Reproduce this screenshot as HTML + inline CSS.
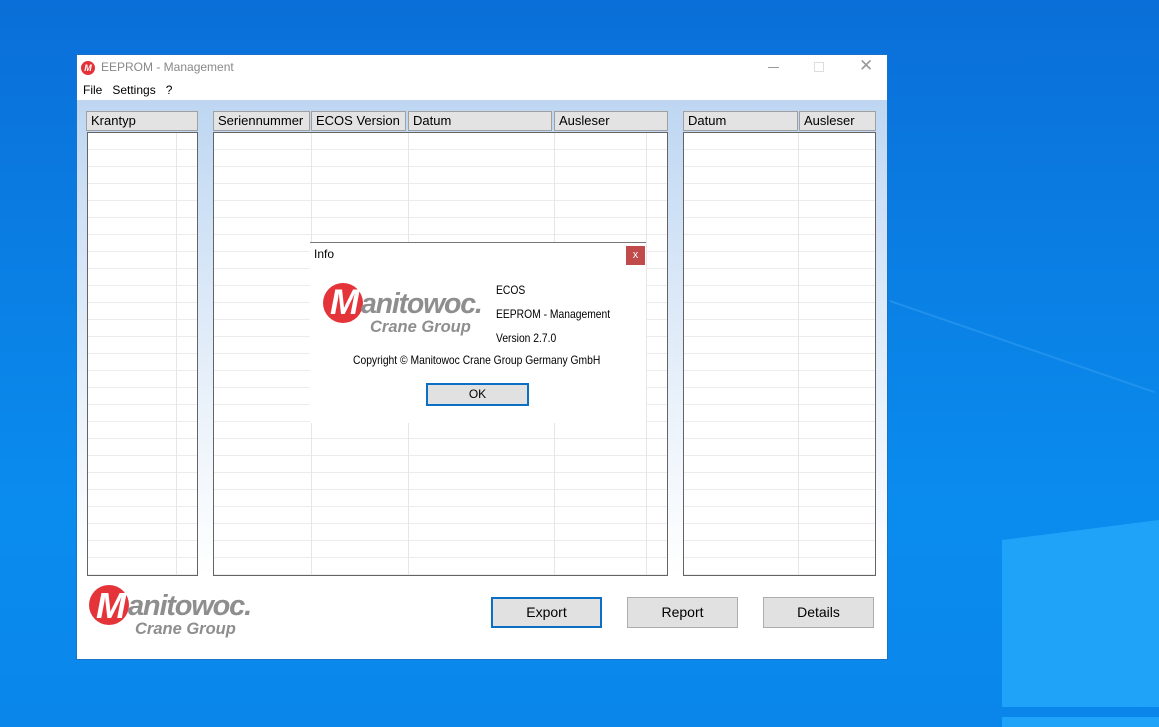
<!DOCTYPE html>
<html><head><meta charset="utf-8"><style>
*{margin:0;padding:0;box-sizing:border-box}
body{width:1159px;height:727px;overflow:hidden;position:relative;font-family:"Liberation Sans",Arial,sans-serif;
background:linear-gradient(180deg,#0a6fd8 0%,#0a82e6 45%,#0a8cee 70%,#0a86ea 100%);}
.a{position:absolute;white-space:nowrap}
.win{left:76px;top:54px;width:812px;height:606px;border:1px solid #1a73c9;background:#fff}
.client{left:0;top:45px;width:810px;height:559px;background:linear-gradient(180deg,#bed6f2 0%,#d7e6f7 30%,#eef4fb 60%,#fff 85%)}
.hdr{background:#e3e3e3;border:1px solid #a0a0a0;font-size:13px;color:#000;padding-left:4px;line-height:18px;height:20px;overflow:hidden}
.list{background:#fff;border:1px solid #646464;
background-image:repeating-linear-gradient(180deg,transparent 0,transparent 16px,#ececec 16px,#ececec 17px)}
.vl{width:1px;background:#e6e6e6}
.btn{background:#e1e1e1;border:1px solid #adadad;font-size:14px;text-align:center;line-height:28px}
.logo-m{font-family:"Liberation Sans",sans-serif;font-weight:bold;font-style:italic;color:#8e8e8e}
.dt{font-size:12px;transform:scaleX(0.86);transform-origin:0 0}
</style></head><body>
<div class="a" style="left:1002px;top:520px;width:157px;height:187px;background:#1fa3f8;clip-path:polygon(0 20px,100% 0,100% 100%,0 100%)"></div>
<div class="a" style="left:1002px;top:717px;width:157px;height:10px;background:#1fa3f8"></div>
<div class="a" style="left:890px;top:300px;width:280px;height:2px;background:#2a98f0;transform:rotate(19deg);transform-origin:0 0;opacity:.7"></div>

<div class="a win">
 <div class="a" style="left:4px;top:6px;width:14px;height:14px;border-radius:50%;background:#e53238;color:#fff;font-size:9px;font-weight:bold;font-style:italic;text-align:center;line-height:14px">M</div>
 <div class="a" style="left:24px;top:5px;font-size:12px;color:#888">EEPROM - Management</div>
 <div class="a" style="left:691px;top:12px;width:11px;height:1px;background:#999"></div>
 <div class="a" style="left:737px;top:7px;width:10px;height:10px;border:1px solid #ddd"></div>
 <div class="a" style="left:782px;top:1px;font-size:17px;color:#999">✕</div>
 <div class="a" style="left:6px;top:28px;font-size:12px;color:#000">File&nbsp;&nbsp;&nbsp;Settings&nbsp;&nbsp;&nbsp;?</div>
 <div class="a client"></div>
</div>

<div class="a hdr" style="left:86px;top:111px;width:112px">Krantyp</div>
<div class="a list" style="left:87px;top:132px;width:111px;height:444px"></div>
<div class="a vl" style="left:176px;top:133px;height:442px"></div>

<div class="a hdr" style="left:213px;top:111px;width:97px">Seriennummer</div>
<div class="a hdr" style="left:311px;top:111px;width:95px">ECOS Version</div>
<div class="a hdr" style="left:408px;top:111px;width:144px">Datum</div>
<div class="a hdr" style="left:554px;top:111px;width:114px">Ausleser</div>
<div class="a list" style="left:213px;top:132px;width:455px;height:444px"></div>
<div class="a vl" style="left:311px;top:133px;height:442px"></div>
<div class="a vl" style="left:408px;top:133px;height:442px"></div>
<div class="a vl" style="left:554px;top:133px;height:442px"></div>
<div class="a vl" style="left:646px;top:133px;height:442px"></div>

<div class="a hdr" style="left:683px;top:111px;width:115px">Datum</div>
<div class="a hdr" style="left:799px;top:111px;width:77px">Ausleser</div>
<div class="a list" style="left:683px;top:132px;width:193px;height:444px"></div>
<div class="a vl" style="left:798px;top:133px;height:442px"></div>

<div class="a" style="left:89px;top:585px;width:40px;height:40px;border-radius:50%;background:#e5333a"></div>
<div class="a logo-m" style="left:96px;top:585px;font-size:36px;color:#fff;letter-spacing:-2px">M</div>
<div class="a logo-m" style="left:128px;top:590px;font-size:29px;letter-spacing:-1.2px">anitowoc.</div>
<div class="a logo-m" style="left:135px;top:620px;font-size:16.5px">Crane Group</div>

<div class="a btn" style="left:491px;top:597px;width:111px;height:31px;border:2px solid #0b6fc4;line-height:27px">Export</div>
<div class="a btn" style="left:627px;top:597px;width:111px;height:31px">Report</div>
<div class="a btn" style="left:763px;top:597px;width:111px;height:31px">Details</div>

<div class="a" style="left:310px;top:242px;width:336px;height:181px;background:#fff;border-top:1px solid #777"></div>
<div class="a" style="left:314px;top:247px;font-size:12px">Info</div>
<div class="a" style="left:626px;top:246px;width:19px;height:19px;background:#c14a4a;color:#fff;font-size:11px;text-align:center;line-height:18px">x</div>
<div class="a" style="left:323px;top:283px;width:40px;height:40px;border-radius:50%;background:#e5333a"></div>
<div class="a logo-m" style="left:330px;top:283px;font-size:35px;color:#fff;letter-spacing:-2px">M</div>
<div class="a logo-m" style="left:361px;top:288px;font-size:28.5px;letter-spacing:-1.2px">anitowoc.</div>
<div class="a logo-m" style="left:370px;top:318px;font-size:16.5px">Crane Group</div>
<div class="a dt" style="left:496px;top:278px;line-height:24px">ECOS<br>EEPROM - Management<br>Version 2.7.0</div>
<div class="a dt" style="left:353px;top:353px">Copyright © Manitowoc Crane Group Germany GmbH</div>
<div class="a btn" style="left:426px;top:383px;width:103px;height:23px;border:2px solid #0b6fc4;font-size:12px;line-height:19px">OK</div>
</body></html>
